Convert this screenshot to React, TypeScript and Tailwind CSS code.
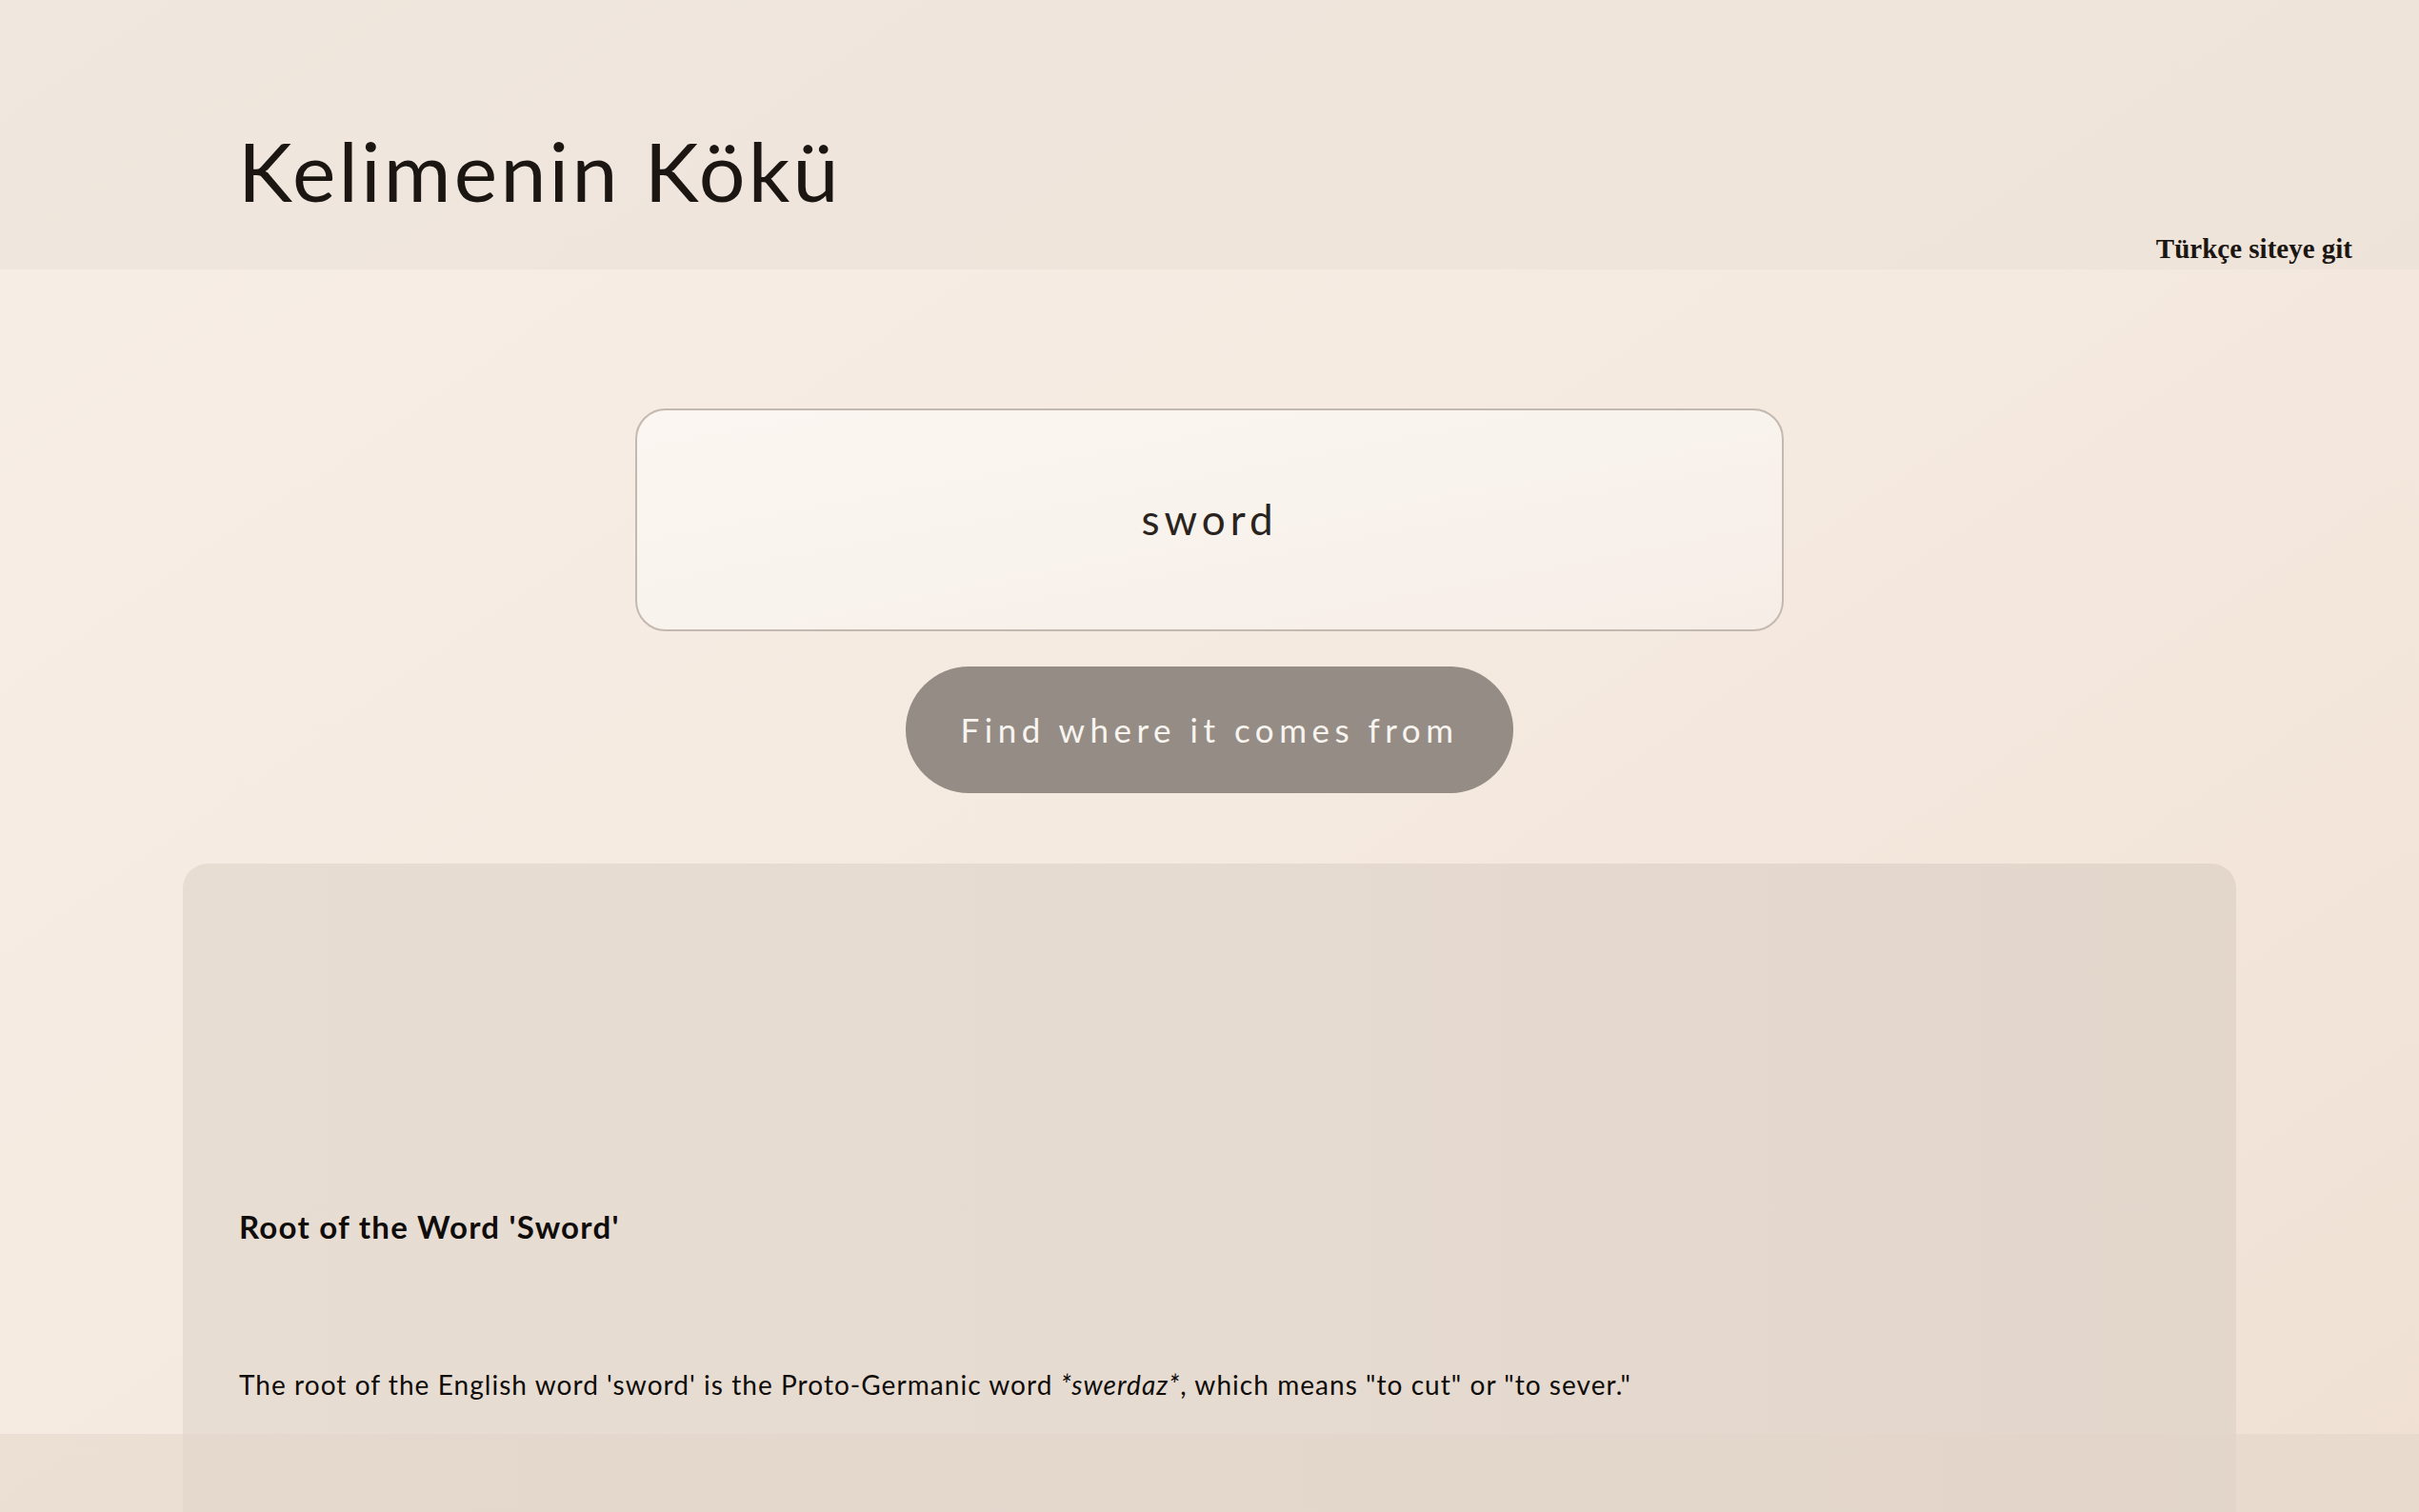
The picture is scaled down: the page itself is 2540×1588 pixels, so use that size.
import React from "react";

export default function App() {
  return (
    <div className="relative min-h-screen w-full overflow-hidden bg-gradient-to-br from-[#f7eee6] via-[#f5eae0] to-[#efdfd2] text-[#1b1612]">
      <header className="flex h-[283px] justify-between bg-[#e6dbd2]/40 pl-[250px] pr-[70px]">
        <h1 className="pt-[136px] text-[86px] font-normal leading-none tracking-[3.2px] [font-family:Lato,'Open_Sans',sans-serif]">
          Kelimenin Kökü
        </h1>
        <a
          href="#"
          className="mt-[247px] self-start text-[29px] font-bold leading-none text-[#1b1612] [font-family:'Liberation_Serif','Times_New_Roman',serif]"
        >
          Türkçe siteye git
        </a>
      </header>

      <main className="flex flex-col items-center">
        <div className="mt-[146px] flex h-[234px] w-[1206px] items-center justify-center rounded-[32px] border-2 border-[#c4b9b1] bg-gradient-to-br from-[#fbf6f1] via-[#f9f3ed] to-[#f6ede6]">
          <span className="-mt-[2px] text-[44px] leading-none tracking-[5px] text-[#2a2420] [font-family:Lato,sans-serif]">
            sword
          </span>
        </div>

        <button className="mt-[37px] flex h-[133px] w-[638px] items-center justify-center rounded-full bg-[#948c85] text-[35px] leading-none tracking-[5.5px] text-[#f8f4ef] [font-family:Lato,sans-serif]">
          Find where it comes from
        </button>

        <section className="mt-[74px] w-[2156px] rounded-[26px] bg-gradient-to-r from-[#e8ddd3] via-[#e6dbd1] to-[#e3d6cb] pb-[300px] pl-[59px] pr-[59px] pt-[365px] [font-family:Lato,sans-serif]">
          <h2 className="text-[33px] font-bold leading-none tracking-[1.25px] text-[#0f0c0a]">
            Root of the Word 'Sword'
          </h2>
          <p className="mt-[135px] text-[28px] leading-none tracking-[1.05px] text-[#0f0c0a]">
            The root of the English word 'sword' is the Proto-Germanic word{" "}
            <em>*swerdaz*</em>, which means "to cut" or "to sever."
          </p>
        </section>
      </main>

      <div className="fixed bottom-0 left-0 h-[82px] w-full bg-[#e2d4c8]/50" />
    </div>
  );
}
